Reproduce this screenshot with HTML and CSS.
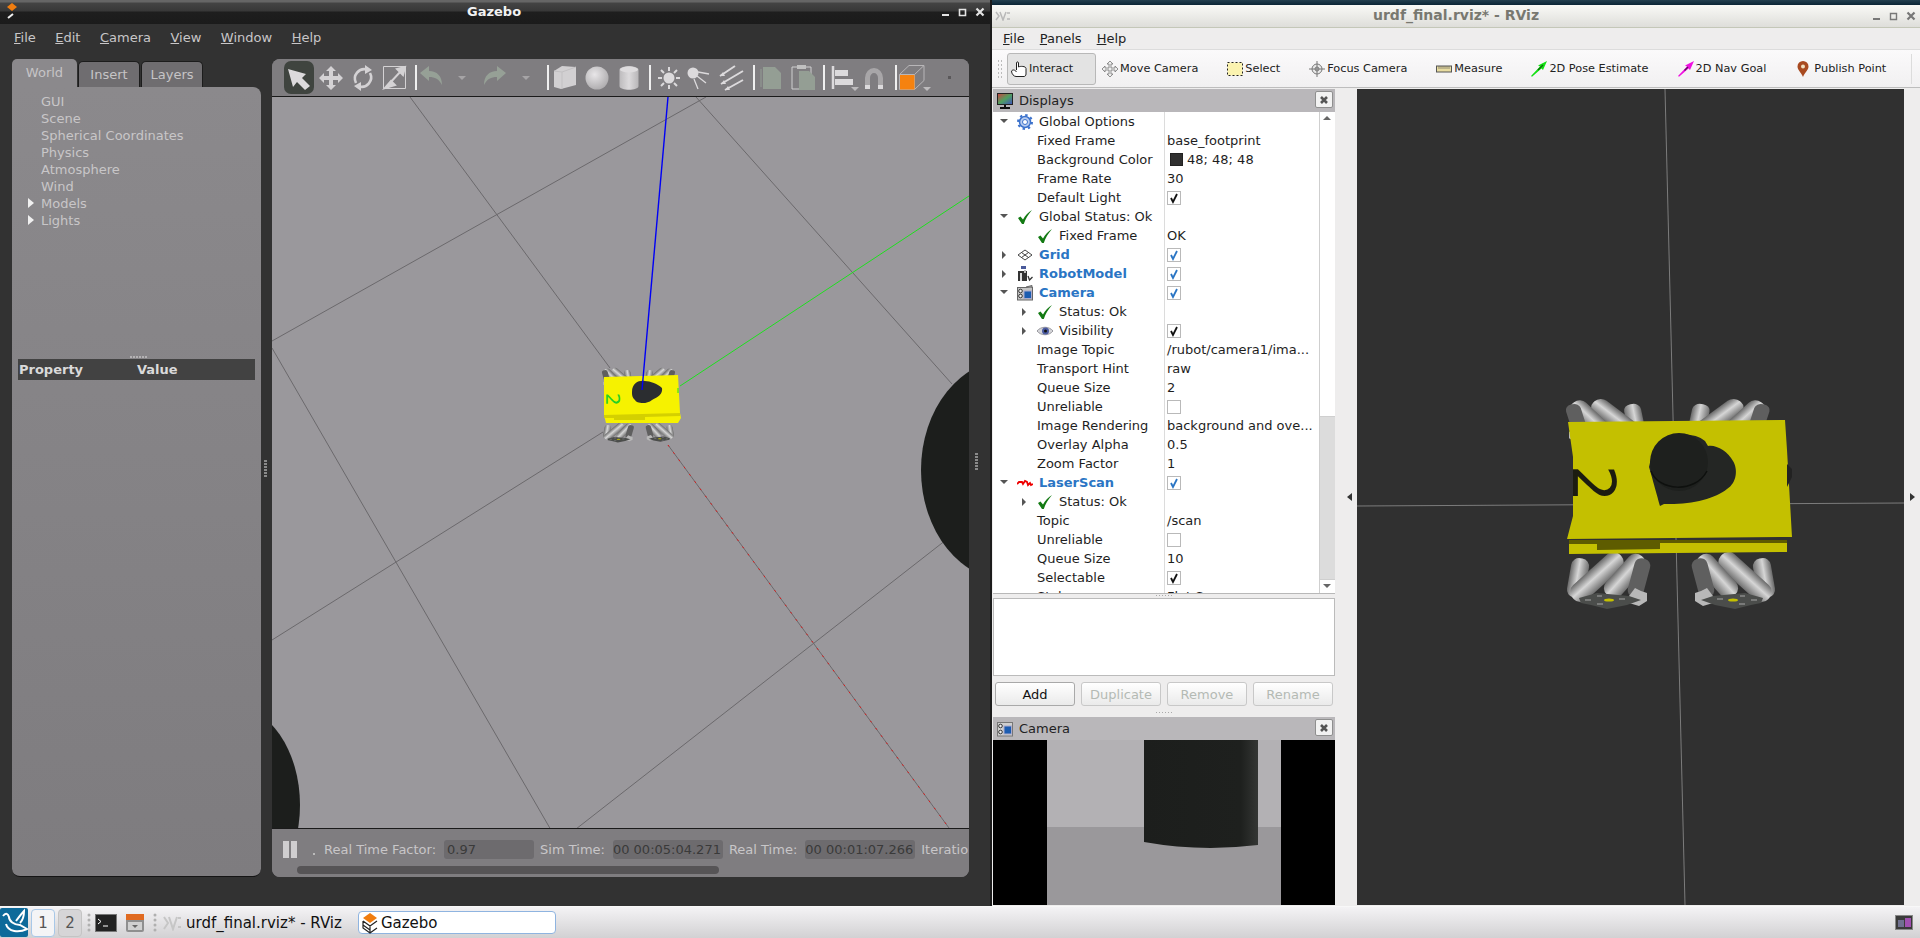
FILE: index.html
```html
<!DOCTYPE html>
<html lang="en">
<head>
<meta charset="utf-8">
<title>Gazebo and RViz</title>
<link rel="stylesheet" href="styles.css">
</head>
<body>
<svg class="defs" aria-hidden="true">
  <defs>
    <linearGradient id="roll" x1="0" y1="0" x2="0" y2="1">
      <stop offset="0" stop-color="#6a6a6a"/><stop offset=".45" stop-color="#d6d6d6"/><stop offset="1" stop-color="#707070"/>
    </linearGradient>
    <radialGradient id="ball" cx=".4" cy=".35" r=".75">
      <stop offset="0" stop-color="#e8e6e8"/><stop offset="1" stop-color="#a8a6a8"/>
    </radialGradient>
    <linearGradient id="can" x1="0" y1="0" x2="1" y2="0">
      <stop offset="0" stop-color="#bdbbbd"/><stop offset=".5" stop-color="#dcdadc"/><stop offset="1" stop-color="#b8b6b8"/>
    </linearGradient>
    <linearGradient id="cylshade" x1="0" y1="0" x2="1" y2="0">
      <stop offset="0" stop-color="#1c1e1c"/><stop offset=".85" stop-color="#1e201e"/><stop offset="1" stop-color="#343634"/>
    </linearGradient>
    <linearGradient id="screen" x1="0" y1="0" x2="1" y2="1">
      <stop offset="0" stop-color="#d04040"/><stop offset=".5" stop-color="#50a060"/><stop offset="1" stop-color="#4050c0"/>
    </linearGradient>
    <g id="wh">
      <rect x="-20" y="-9" width="40" height="18" rx="8" fill="url(#roll)" transform="translate(11,26) rotate(-80)"/>
      <rect x="-32" y="-10" width="64" height="20" rx="9" fill="url(#roll)" transform="translate(30,25) rotate(-42)"/>
      <rect x="-26" y="-10" width="52" height="20" rx="9" fill="url(#roll)" transform="translate(58,24) rotate(-48)"/>
      <rect x="-20" y="-8" width="40" height="16" rx="7" fill="#5f5f5f" transform="translate(72,26) rotate(-75)"/>
      <path d="M62,44 l6,-8 6,3 6,2 0,8 -8,5 -10,-3z" fill="#b8b8b8"/>
      <path d="M12,46 L30,41 62,44 74,48 60,53 40,57 24,53 14,51z" fill="#4b4d4b"/>
      <ellipse cx="42" cy="48" rx="5" ry="1.6" fill="#c4c000"/>
      <path d="M18,48h6M30,44h5M52,47h6M30,52h6" stroke="#a8a8a8" stroke-width="1"/>
    </g>
    <symbol id="i-check" viewBox="0 0 16 16">
      <path d="M1,9 L3.500,7.500 L6,10.500 C8,6.500 11,3.500 15,1 C11,5.500 8.500,10 6.800,15 L5,15 Z" fill="#137a13"/>
    </symbol>
    <symbol id="i-gear" viewBox="0 0 16 16">
      <circle cx="8" cy="8" r="5.500" fill="#b9cdf0" stroke="#3c72cc" stroke-width="1.500"/>
      <circle cx="8" cy="8" r="7" fill="none" stroke="#3c72cc" stroke-width="2" stroke-dasharray="2.400 3.100"/>
      <circle cx="8" cy="8" r="2.500" fill="#fff" stroke="#3c72cc"/>
    </symbol>
    <symbol id="i-grid" viewBox="0 0 16 16">
      <path d="M8,3 L15,8 8,13 1,8Z M4.500,5.500 L11.500,10.500 M11.500,5.500 L4.500,10.500" fill="none" stroke="#444" stroke-width="1"/>
    </symbol>
    <symbol id="i-robot" viewBox="0 0 16 16">
      <rect x="4" y="0" width="5" height="3" fill="#4a5a9a"/>
      <rect x="1" y="5" width="9" height="10" fill="#333"/>
      <rect x="3" y="7" width="2" height="8" fill="#ddd"/>
      <rect x="7" y="4" width="2" height="3" fill="#bbb"/>
      <path d="M11,10 l1.500,4 3,-3" fill="none" stroke="#333" stroke-width="1.300"/>
    </symbol>
    <symbol id="i-camera" viewBox="0 0 16 16">
      <rect x="0.500" y="2.500" width="15" height="12.500" fill="#c4c4c4" stroke="#666"/>
      <path d="M9,2 L15,0.500 V3" fill="#999" stroke="#666"/>
      <circle cx="3.500" cy="6" r="1.800" fill="#eee" stroke="#333"/>
      <circle cx="3.500" cy="11" r="1.800" fill="#eee" stroke="#333"/>
      <rect x="7" y="6" width="7.500" height="7.500" fill="#1c5cb0" stroke="#aac"/>
    </symbol>
    <symbol id="i-eye" viewBox="0 0 16 16">
      <path d="M0,8 C4,3 12,3 16,8 C12,13 4,13 0,8Z" fill="#d4d4d8" stroke="#9a9aa0"/>
      <circle cx="8.500" cy="8" r="3.500" fill="#4a5aa0"/>
      <circle cx="8.500" cy="8" r="1.500" fill="#111"/>
    </symbol>
    <symbol id="i-laser" viewBox="0 0 16 16">
      <path d="M0,9 L2,7 5,7 6,9 8,6 10,7 11,10 13,8 14,10 16,9" fill="none" stroke="#ee0000" stroke-width="1.800"/>
    </symbol>
    <symbol id="i-close" viewBox="0 0 10 10">
      <path d="M2,2 L8,8 M8,2 L2,8" stroke="#555" stroke-width="2.600"/>
    </symbol>
    <symbol id="i-cam-title" viewBox="0 0 16 16">
      <rect x="0.500" y="1.500" width="15" height="13.500" fill="#cfcfcf" stroke="#777"/>
      <circle cx="3.500" cy="5" r="1.800" fill="#eee" stroke="#333"/>
      <circle cx="3.500" cy="11" r="1.800" fill="#eee" stroke="#333"/>
      <rect x="7" y="5" width="7.500" height="8" fill="#1c5cb0" stroke="#aac"/>
    </symbol>
    <symbol id="i-grip" viewBox="0 0 6 20">
      <path d="M1,2h1M4,2h1M1,6h1M4,6h1M1,10h1M4,10h1M1,14h1M4,14h1M1,18h1M4,18h1" stroke="#bbb" stroke-width="2"/>
    </symbol>
  </defs>
</svg>

<main class="desktop">
  <section class="gazebo">
    <header class="gz-title">
      <svg class="gz-logo" viewBox="0 0 16 20" width="16" height="20"><path d="M8,1 L13,5 8,9 3,5Z" fill="#f07d10"/><path d="M4,16 L9,12" stroke="#f0f0f0" stroke-width="2"/></svg>
      <span class="gz-name">Gazebo</span>
      <div class="gz-winbtns">
        <svg viewBox="0 0 10 10" width="10" height="10"><path d="M1,8h7" stroke="#e4e4e4" stroke-width="2"/></svg>
        <svg viewBox="0 0 10 10" width="10" height="10"><path d="M1.500,2.500h6v6h-6z" fill="none" stroke="#e4e4e4" stroke-width="1.600"/></svg>
        <svg viewBox="0 0 10 10" width="10" height="10"><path d="M1.500,1.500L8.500,8.500M8.500,1.500L1.500,8.500" stroke="#e4e4e4" stroke-width="2.200"/></svg>
      </div>
    </header>
    <nav class="gz-menu">
      <span><u>F</u>ile</span><span><u>E</u>dit</span><span><u>C</u>amera</span><span><u>V</u>iew</span><span><u>W</u>indow</span><span><u>H</u>elp</span>
    </nav>
    <div class="gz-body">
      <aside class="gz-left">
        <div class="gz-tabs">
          <span class="gz-tab active">World</span><span class="gz-tab">Insert</span><span class="gz-tab">Layers</span>
        </div>
        <div class="gz-panel">
          <ul class="gz-tree">
            <li>GUI</li><li>Scene</li><li>Spherical Coordinates</li><li>Physics</li><li>Atmosphere</li><li>Wind</li>
            <li class="has-kids">Models</li><li class="has-kids">Lights</li>
          </ul>
          <div class="gz-split-dots"></div>
          <div class="gz-prop"><span class="gz-prop-a">Property</span><span>Value</span></div>
        </div>
      </aside>
      <div class="gz-gutter"><span class="gz-grip"></span></div>
      <div class="gz-main">
        <div class="gz-tools">
          <span class="tb w32 active"><svg viewBox="0 0 30 33" width="30" height="33"><path d="M4,8 L22,13 18,17 26,25 21,29 13,21 9,26Z" fill="#dcdadc"/></svg></span>
          <span class="tb w32"><svg viewBox="0 0 32 34" width="32" height="34"><path d="M16,5 l5,5 h-3 v5 h5 v-3 l5,5 -5,5 v-3 h-5 v5 h3 l-5,5 -5,-5 h3 v-5 h-5 v3 l-5,-5 5,-5 v3 h5 v-5 h-3z" fill="#d4d2d4"/></svg></span>
          <span class="tb w32"><svg viewBox="0 0 32 34" width="32" height="34"><path d="M9,22 A9.500,9.500 0 0 1 20,8.500 M23,12 A9.500,9.500 0 0 1 12,25.500" fill="none" stroke="#d4d2d4" stroke-width="2.600"/><path d="M18,4 L25,9 18,13Z M14,21 L7,25 14,30Z" fill="#d4d2d4"/></svg></span>
          <span class="tb w32"><svg viewBox="0 0 32 34" width="32" height="34"><path d="M4.500,5.500h22v22h-22z" fill="none" stroke="#d4d2d4"/><path d="M6,27 L12,20 16,24Z M26,6 L18,8 24,14Z M10,23 L22,10" fill="#d4d2d4" stroke="#d4d2d4" stroke-width="2"/></svg></span>
          <span class="sep"></span>
          <span class="tb w28"><svg viewBox="0 0 28 34" width="28" height="34"><path d="M3,12 L12,5 12,10 C20,10 25,15 25,24 C22,18 18,16 12,16 L12,20Z" fill="#96a096"/></svg></span>
          <span class="tb w34"><span class="dd"></span></span>
          <span class="tb w30"><svg viewBox="0 0 30 34" width="30" height="34"><path d="M27,12 L18,5 18,10 C10,10 5,15 5,24 C8,18 12,16 18,16 L18,20Z" fill="#96a096"/></svg></span>
          <span class="tb w34"><span class="dd"></span></span>
          <span class="sep"></span>
          <span class="tb w32"><svg viewBox="0 0 32 34" width="32" height="34"><path d="M5,10 L13,5 27,6 27,24 12,28 5,26Z" fill="#d2d0d2"/><path d="M5,10 L13,11 27,6 M13,11V28" fill="none" stroke="#c2c0c2"/></svg></span>
          <span class="tb w32"><svg viewBox="0 0 32 34" width="32" height="34"><circle cx="16" cy="17" r="11.500" fill="url(#ball)"/></svg></span>
          <span class="tb w32"><svg viewBox="0 0 32 34" width="32" height="34"><path d="M6.500,9 C6.500,4 25.500,4 25.500,9 V25 C25.500,30 6.500,30 6.500,25Z" fill="url(#can)"/><ellipse cx="16" cy="8.500" rx="9" ry="3" fill="#dedcde"/></svg></span>
          <span class="sep"></span>
          <span class="tb w36"><svg viewBox="0 0 36 34" width="36" height="34"><circle cx="18" cy="17" r="5.500" fill="#dcdadc"/><path d="M18,6v4M18,24v4M7,17h4M25,17h4M10,9l3,3M26,9l-3,3M10,25l3,-3M26,25l-3,-3" stroke="#dcdadc" stroke-width="2"/></svg></span>
          <span class="tb w24"><svg viewBox="0 0 24 34" width="24" height="34" class="over"><circle cx="6" cy="12" r="5.500" fill="#dcdadc"/><path d="M11,11l11,2M10,15l9,7M7,18l4,10" stroke="#dcdadc" stroke-width="1.300"/></svg></span>
          <span class="tb w42"><svg viewBox="0 0 42 34" width="42" height="34"><path d="M9,15 L24,5 M10,23 L32,10 M14,29 L32,19" stroke="#dcdadc" stroke-width="2"/><path d="M9,15l5,0 -2,-4zM10,23l5,0 -2,-4zM14,29l5,0 -2,-4z" fill="#dcdadc"/></svg></span>
          <span class="sep flush"></span>
          <span class="tb w32"><svg viewBox="0 0 32 34" width="32" height="34"><path d="M8,6 H20 L26,12 V28 H8Z" fill="#949e94"/><path d="M6,8V26" stroke="#949e94"/></svg></span>
          <span class="tb w32"><svg viewBox="0 0 32 34" width="32" height="34"><path d="M5,6 H24 V28 H5Z" fill="none" stroke="#d0d0d0"/><path d="M12,10 H22 L28,16 V29 H12Z" fill="#949e94"/><rect x="10" y="4" width="9" height="4" fill="#c0c0c0"/></svg></span>
          <span class="sep"></span>
          <span class="tb w36"><svg viewBox="0 0 36 34" width="36" height="34"><path d="M8,5V28" stroke="#dcdadc" stroke-width="2.500"/><path d="M10,9h13v6h-13zM10,18h18v6h-18z" fill="#dcdadc"/><path d="M26,26h8l-4,4z" fill="#bdbbbd"/></svg></span>
          <span class="tb w26"><svg viewBox="0 0 34 34" width="34" height="34" class="wide"><path d="M8,28 V17 A9,10 0 0 1 26,17 V28 H21 V17 A4,5 0 0 0 13,17 V28Z" fill="#a8a6a8"/><path d="M8,24h5v4h-5zM21,24h5v4h-5z" fill="#dcdadc"/></svg></span>
          <span class="sep far"></span>
          <span class="tb w44"><svg viewBox="0 0 44 34" width="44" height="34"><path d="M2.500,13.500h15v15h-15zM2.500,13.500 L12,4.500h15v15l-9.500,9M17.500,13.500 L27,4.500" fill="none" stroke="#b8b6b8"/><rect x="3" y="14" width="14.500" height="14.500" fill="#f5820f"/><path d="M26,26h8l-4,4z" fill="#bdbbbd"/></svg></span>
          <span class="tb-dot"></span>
        </div>
        <svg class="gz-scene" viewBox="272 97 697 731" preserveAspectRatio="none">
          <g class="gl">
            <path d="M706,97 L272,341"/>
            <path d="M410,97 L610,368"/>
            <path d="M696,97 L952,384"/>
            <path d="M272,348 L551,830"/>
            <path d="M272,640 L603,432"/>
            <path d="M576,829 L969,522"/>
            <path d="M668,445 L949,828"/>
          </g>
          <path d="M668,445 L949,828" class="rd"/>
          <path d="M680,386 L969,196" class="gn"/>
          <ellipse cx="1010" cy="470" rx="89" ry="111" class="blk"/>
          <ellipse cx="230" cy="805" rx="70" ry="100" class="blk"/>
          <use href="#wh" transform="translate(632,368) scale(-.36,.34)"/>
          <use href="#wh" transform="translate(645,368) scale(.36,.34)"/>
          <use href="#wh" transform="translate(603,423) scale(.37,.34)"/>
          <use href="#wh" transform="translate(674,423) scale(-.34,.33)"/>
          <path d="M604,377 L678,375 680,413 681,418 678,423 606,423 604,415Z" fill="#f6f200"/>
          <path d="M604,415 L680,413 680,416 645,417 645,420 614,420 614,418 604,418Z" fill="#d4d000"/>
          <text x="0" y="0" class="gz-two" transform="translate(606,393) rotate(90)">2</text>
          <path d="M632,392 C632,382 640,380 645,381 C650,381 658,384 662,388 C663,394 658,397 652,400 C646,405 636,403 635,400 C632,397 632,395 632,392Z" fill="#2b2d30"/>
          <path d="M668,97 L642,390" class="bl"/>
          <path d="M678,388v5" class="gn"/>
        </svg>
        <div class="gz-status">
          <div class="gz-stats">
            <svg class="gz-pause" viewBox="0 0 14 17" width="14" height="17"><path d="M0,0h6v17h-6zM8,0h6v17h-6z" fill="#d0ced0"/></svg>
            <span class="gz-dot"></span>
            <span class="lbl first">Real Time Factor:</span><span class="fld wide">0.97</span>
            <span class="lbl">Sim Time:</span><span class="fld">00 00:05:04.271</span>
            <span class="lbl">Real Time:</span><span class="fld">00 00:01:07.266</span>
            <span class="lbl">Iterations:</span>
          </div>
          <div class="gz-scroll"><span class="gz-thumb"></span></div>
        </div>
      </div>
      <div class="gz-gutter right"><span class="gz-grip"></span></div>
    </div>
    <div class="gz-foot">
      <svg viewBox="0 0 11 11" width="11" height="11"><path d="M9.500,1.500h.01M6.500,4.500h.01M9.500,4.500h.01M3.500,7.500h.01M6.500,7.500h.01M9.500,7.500h.01M.500,10.500h.01M3.500,10.500h.01M6.500,10.500h.01M9.500,10.500h.01" stroke="#8a8a8a" stroke-width="2"/></svg>
    </div>
  </section>

  <section class="rviz">
    <div class="rv-top"></div>
    <header class="rv-title">
      <svg class="rv-logo" viewBox="0 0 16 10" width="16" height="10"><path d="M1,1l3,4 -3,4M5,1l3,8 3,-8M12,2h3M12,8h3" fill="none" stroke="#b8b8b8" stroke-width="1.500"/></svg>
      <span class="rv-name">urdf_final.rviz* - RViz</span>
      <div class="rv-winbtns">
        <svg viewBox="0 0 10 10" width="10" height="10"><path d="M1,8h7" stroke="#777" stroke-width="2"/></svg>
        <svg viewBox="0 0 10 10" width="10" height="10"><path d="M1.500,2.500h6v6h-6z" fill="none" stroke="#777" stroke-width="1.400"/></svg>
        <svg viewBox="0 0 10 10" width="10" height="10"><path d="M1.500,1.500L8.500,8.500M8.500,1.500L1.500,8.500" stroke="#777" stroke-width="2.200"/></svg>
      </div>
    </header>
    <nav class="rv-menu"><span><u>F</u>ile</span><span><u>P</u>anels</span><span><u>H</u>elp</span></nav>
    <div class="rv-tools">
      <svg class="rv-handle" viewBox="0 0 6 20" width="6" height="20"><use href="#i-grip"/></svg>
      <div class="rt on"><svg viewBox="0 0 16 16" width="16" height="16"><path d="M5.500,9 V2 C5.500,.5 7.500,.5 7.500,2 V6 C9,5 15,5 15,7.500 V13 C15,14.500 14,15.500 13,15.500 H5 C3,15.500 .5,13 .5,10 C1.500,8.500 4,8.500 5.500,11" fill="#fff" stroke="#222"/></svg><span>Interact</span></div>
      <div class="rt"><svg viewBox="0 0 16 16" width="16" height="16"><path d="M8,0 l3,3h-2v4h4v-2l3,3 -3,3v-2h-4v4h2l-3,3 -3,-3h2v-4h-4v2l-3,-3 3,-3v2h4v-4h-2z" fill="#eee" stroke="#777" stroke-width=".8"/></svg><span>Move Camera</span></div>
      <div class="rt"><svg viewBox="0 0 16 16" width="16" height="16"><rect x=".5" y="1.500" width="15" height="13" fill="#fbf3b0" stroke="#222" stroke-dasharray="2 2"/></svg><span>Select</span></div>
      <div class="rt"><svg viewBox="0 0 16 16" width="16" height="16"><circle cx="8" cy="8" r="5" fill="#e8e8e8" stroke="#777"/><path d="M8,0V16M0,8H16" stroke="#777"/><circle cx="8" cy="8" r="2" fill="none" stroke="#777"/></svg><span>Focus Camera</span></div>
      <div class="rt"><svg viewBox="0 0 16 16" width="16" height="16"><rect x=".5" y="5" width="15" height="6" fill="#e8dca0" stroke="#555"/><path d="M3,5v3M5,5v3M7,5v3M9,5v3M11,5v3M13,5v3" stroke="#555" stroke-width=".6"/></svg><span>Measure</span></div>
      <div class="rt"><svg viewBox="0 0 16 16" width="16" height="16"><path d="M0,15 L9,5.500 7,4.500 16,0 12,9 10.500,7.500 1,15.800Z" fill="#12e012"/><path d="M7,9 L12,4" stroke="#0a700a" stroke-width="1.400"/></svg><span>2D Pose Estimate</span></div>
      <div class="rt"><svg viewBox="0 0 16 16" width="16" height="16"><path d="M0,15 L9,5.500 7,4.500 16,0 12,9 10.500,7.500 1,15.800Z" fill="#f010e0"/><path d="M6.500,9.500 L10,6" stroke="#601060" stroke-width="1.400"/></svg><span>2D Nav Goal</span></div>
      <div class="rt pin"><svg viewBox="0 0 12 16" width="12" height="16"><path d="M6,16 C4,11 .5,9 .5,5.500 A5.500,5.500 0 0 1 11.500,5.500 C11.500,9 8,11 6,16Z" fill="#a84a20"/><circle cx="6" cy="5.500" r="2" fill="#f0e0c0"/></svg><span>Publish Point</span></div>
      <span class="rv-more-wrap"><span class="rv-more">››</span></span>
    </div>
    <div class="rv-body">
      <aside class="rv-dock">
        <div class="dock-title"><svg viewBox="0 0 16 16" width="16" height="16"><rect x=".5" y=".5" width="15" height="11" fill="url(#screen)" stroke="#222"/><path d="M8,12v2M3,15h10" stroke="#111" stroke-width="2"/></svg><span>Displays</span><span class="dock-x"><svg width="10" height="10"><use href="#i-close"/></svg></span></div>
        <div class="tree-wrap">
          <div class="tree">
            <div class="row"><div class="name"><span class="caret down"></span><svg class="ic"><use href="#i-gear"/></svg><span>Global Options</span></div><div class="val"></div></div>
            <div class="row"><div class="name prop">Fixed Frame</div><div class="val">base_footprint</div></div>
            <div class="row"><div class="name prop">Background Color</div><div class="val"><span class="swatch"></span>48; 48; 48</div></div>
            <div class="row"><div class="name prop">Frame Rate</div><div class="val">30</div></div>
            <div class="row"><div class="name prop">Default Light</div><div class="val"><span class="cb"><svg viewBox="0 0 12 12"><path d="M3,6 L5,10 9,2" class="tick"/></svg></span></div></div>
            <div class="row"><div class="name"><span class="caret down"></span><svg class="ic"><use href="#i-check"/></svg><span>Global Status: Ok</span></div><div class="val"></div></div>
            <div class="row"><div class="name sub"><span class="caret"></span><svg class="ic"><use href="#i-check"/></svg><span>Fixed Frame</span></div><div class="val">OK</div></div>
            <div class="row disp"><div class="name"><span class="caret right"></span><svg class="ic"><use href="#i-grid"/></svg><span>Grid</span></div><div class="val"><span class="cb"><svg viewBox="0 0 12 12"><path d="M3,6 L5,10 9,2" class="tick"/></svg></span></div></div>
            <div class="row disp"><div class="name"><span class="caret right"></span><svg class="ic"><use href="#i-robot"/></svg><span>RobotModel</span></div><div class="val"><span class="cb"><svg viewBox="0 0 12 12"><path d="M3,6 L5,10 9,2" class="tick"/></svg></span></div></div>
            <div class="row disp"><div class="name"><span class="caret down"></span><svg class="ic"><use href="#i-camera"/></svg><span>Camera</span></div><div class="val"><span class="cb"><svg viewBox="0 0 12 12"><path d="M3,6 L5,10 9,2" class="tick"/></svg></span></div></div>
            <div class="row"><div class="name sub"><span class="caret right"></span><svg class="ic"><use href="#i-check"/></svg><span>Status: Ok</span></div><div class="val"></div></div>
            <div class="row"><div class="name sub"><span class="caret right"></span><svg class="ic"><use href="#i-eye"/></svg><span>Visibility</span></div><div class="val"><span class="cb"><svg viewBox="0 0 12 12"><path d="M3,6 L5,10 9,2" class="tick"/></svg></span></div></div>
            <div class="row"><div class="name prop">Image Topic</div><div class="val">/rubot/camera1/ima...</div></div>
            <div class="row"><div class="name prop">Transport Hint</div><div class="val">raw</div></div>
            <div class="row"><div class="name prop">Queue Size</div><div class="val">2</div></div>
            <div class="row"><div class="name prop">Unreliable</div><div class="val"><span class="cb"></span></div></div>
            <div class="row"><div class="name prop">Image Rendering</div><div class="val">background and ove...</div></div>
            <div class="row"><div class="name prop">Overlay Alpha</div><div class="val">0.5</div></div>
            <div class="row"><div class="name prop">Zoom Factor</div><div class="val">1</div></div>
            <div class="row disp"><div class="name"><span class="caret down"></span><svg class="ic"><use href="#i-laser"/></svg><span>LaserScan</span></div><div class="val"><span class="cb"><svg viewBox="0 0 12 12"><path d="M3,6 L5,10 9,2" class="tick"/></svg></span></div></div>
            <div class="row"><div class="name sub"><span class="caret right"></span><svg class="ic"><use href="#i-check"/></svg><span>Status: Ok</span></div><div class="val"></div></div>
            <div class="row"><div class="name prop">Topic</div><div class="val">/scan</div></div>
            <div class="row"><div class="name prop">Unreliable</div><div class="val"><span class="cb"></span></div></div>
            <div class="row"><div class="name prop">Queue Size</div><div class="val">10</div></div>
            <div class="row"><div class="name prop">Selectable</div><div class="val"><span class="cb"><svg viewBox="0 0 12 12"><path d="M3,6 L5,10 9,2" class="tick"/></svg></span></div></div>
            <div class="row"><div class="name prop">Style</div><div class="val">Flat Squares</div></div>
          </div>
          <div class="vbar"><span class="vbar-up"></span><span class="vbar-thumb"></span><span class="vbar-trough"></span><span class="vbar-down"></span></div>
        </div>
        <div class="dots-h"></div>
        <div class="desc"></div>
        <div class="dock-btns">
          <button class="btn">Add</button><button class="btn off">Duplicate</button><button class="btn off">Remove</button><button class="btn off">Rename</button>
        </div>
        <div class="dots-h tall"></div>
        <div class="dock-title"><svg viewBox="0 0 16 16" width="16" height="16"><use href="#i-cam-title"/></svg><span>Camera</span><span class="dock-x"><svg width="10" height="10"><use href="#i-close"/></svg></span></div>
        <svg class="cam-img" viewBox="993 741 342 165" preserveAspectRatio="none">
          <rect x="993" y="741" width="342" height="165" fill="#000"/>
          <rect x="1047" y="741" width="234" height="87" fill="#b3b1b4"/>
          <rect x="1047" y="828" width="234" height="78" fill="#9a989b"/>
          <path d="M1144,741 H1258 V846 Q1200,853 1144,843Z" fill="url(#cylshade)"/>
        </svg>
      </aside>
      <div class="rv-split"><span class="arrow-l"></span></div>
      <svg class="rv-scene" viewBox="1357 90 547 816" preserveAspectRatio="none">
        <path d="M1665,90 L1685,906" class="rl"/>
        <path d="M1357,507 L1904,504" class="rl"/>
        <use href="#wh" transform="translate(1645,400) scale(-.95,.8)"/>
        <use href="#wh" transform="translate(1688,400) scale(.98,.8)"/>
        <use href="#wh" transform="translate(1567,553)"/>
        <use href="#wh" transform="translate(1775,553) scale(-1,1)"/>
        <path d="M1569,541 H1787 V553 L1569,555Z" fill="#c4c000"/>
        <path d="M1569,541 H1787 V544 H1660 V550 L1597,551 V545 H1569Z" fill="#5e5c00"/>
        <path d="M1568,423 L1785,421 1787,451 1792,538 1567,540 1573,517 1573,458Z" fill="#c4c000"/>
        <text x="0" y="0" class="rv-two" transform="translate(1573,466) rotate(90)">2</text>
        <path d="M1787,465 L1792,470 1792,478 1787,488Z" fill="#222"/>
        <path d="M1649,468 C1652,478 1658,500 1660,507 L1664,505 C1690,506 1715,500 1727,490 C1737,484 1738,470 1733,462 C1728,452 1715,445 1708,447 L1705,442 C1690,430 1660,435 1652,455Z" fill="#242624"/>
        <circle cx="1679" cy="463" r="29" fill="#1e201e"/>
        <path d="M1651,472 C1658,492 1695,495 1707,472" fill="none" stroke="#0e100e" stroke-width="1.500"/>
      </svg>
      <div class="rv-edge"><span class="arrow-r"></span></div>
    </div>
  </section>
</main>

<footer class="taskbar">
  <span class="start"><svg viewBox="0 0 28 28" width="28" height="28"><path d="M3,8 C6,4 8,6 9,9 C9,13 14,17 20,17 L27,21 C19,25 8,24 6,16 M16,13 C19,9 22,5 24,3 C24,8 23,12 20,15" fill="none" stroke="#fff" stroke-width="2"/></svg></span>
  <span class="pager cur">1</span><span class="pager pressed">2</span>
  <svg class="tk-dots" viewBox="0 0 4 20" width="4" height="20"><path d="M2,2v.01M2,7v.01M2,12v.01M2,17v.01" stroke="#b0b0b0" stroke-width="3" stroke-linecap="round"/></svg>
  <svg class="tk-app" viewBox="0 0 22 18" width="22" height="18"><rect x=".5" y=".5" width="21" height="17" fill="#222" stroke="#777"/><path d="M3,5l3,2.500 -3,2.500M8,12h5" fill="none" stroke="#fff"/></svg>
  <svg class="tk-app2" viewBox="0 0 18 20" width="18" height="20"><rect x="0" y="1" width="18" height="18" rx="2" fill="#8f8f8f"/><rect x="0" y="1" width="18" height="6" fill="#e06a20"/><rect x="2" y="9" width="14" height="8" fill="#d0d0d0"/><path d="M6,12h6l-3,3z" fill="#666"/></svg>
  <svg class="tk-dots b" viewBox="0 0 4 20" width="4" height="20"><path d="M2,2v.01M2,7v.01M2,12v.01M2,17v.01" stroke="#b0b0b0" stroke-width="3" stroke-linecap="round"/></svg>
  <span class="tk-win"><svg viewBox="0 0 20 16" width="20" height="16"><path d="M2,2l4,6 -4,6M7,2l4,12 4,-12M16,3h3M16,12h3" fill="none" stroke="#c6c6c6" stroke-width="2"/></svg>urdf_final.rviz* - RViz</span>
  <span class="tk-win active"><svg viewBox="0 0 18 22" width="18" height="22"><path d="M9,1 L16,6 9,11 2,6Z" fill="#f07d10"/><path d="M2,9 L9,14 16,9 M2,9 V16 L9,21 16,16 M9,14 V21 M2,13 L9,18" fill="none" stroke="#222" stroke-width="1.200"/></svg>Gazebo</span>
  <svg class="tk-tray" viewBox="0 0 18 15" width="18" height="15"><rect x=".5" y=".5" width="17" height="14" fill="#3a3a3a" stroke="#888"/><rect x="10" y="3" width="6" height="9" fill="#a050b0"/><rect x="3" y="5" width="6" height="7" fill="#707090"/></svg>
</footer>
</body>
</html>
```

FILE: styles.css
```css
* { box-sizing: border-box; }
html, body { margin: 0; height: 100%; overflow: hidden; }
body {
  display: flex;
  flex-direction: column;
  width: 1920px;
  height: 938px;
  font-family: "DejaVu Sans", sans-serif;
  font-size: 13px;
  background: #323232;
}
.defs { position: absolute; width: 0; height: 0; }
svg { display: block; flex: none; }
u { text-underline-offset: 1px; }

.desktop { display: flex; height: 906px; }

/* Gazebo window */
.gazebo { width: 990px; display: flex; flex-direction: column; background: #323232; }
.gz-title {
  height: 24px;
  display: flex;
  align-items: center;
  position: relative;
  background: linear-gradient(#666 0, #666 2px, #444 3px, #383838 11px, #1e1e1e 12px, #1b1b1b 100%);
}
.gz-logo { margin-left: 4px; }
.gz-name {
  position: absolute;
  left: 467px;
  top: 3px;
  color: #f2f2f2;
  font-weight: bold;
  font-size: 13px;
  line-height: 17px;
}
.gz-winbtns { margin-left: auto; margin-right: 5px; display: flex; gap: 7px; }
.gz-menu { height: 26px; display: flex; align-items: center; gap: 19.500px; padding-left: 14px; color: #c8c6c8; }
.gz-body { height: 827px; padding-top: 9px; display: flex; }
.gz-left { margin-left: 12px; width: 249px; display: flex; flex-direction: column; }
.gz-tabs { height: 28px; display: flex; align-items: flex-end; gap: 1px; }
.gz-tab {
  width: 62px;
  height: 26px;
  background: #6f6d70;
  border: 1px solid #1c1c1c;
  border-bottom: none;
  border-radius: 5px 5px 0 0;
  color: #c6c4c6;
  text-align: center;
  line-height: 25px;
}
.gz-tab.active { width: 65px; height: 28px; background: #8b898c; border: none; line-height: 28px; }
.gz-panel {
  height: 790px;
  position: relative;
  padding-top: 6px;
  background: linear-gradient(#8b898c, #7e7c7f);
  border-bottom: 1px solid #151515;
  border-radius: 0 8px 8px 8px;
  color: #c8c6c8;
}
.gz-tree { margin: 0; padding: 0 0 0 29px; list-style: none; line-height: 17px; }
.gz-tree li { position: relative; }
.has-kids::before {
  content: "";
  position: absolute;
  left: -13px;
  top: 3px;
  border-left: 6px solid #f0f0f0;
  border-top: 5.500px solid transparent;
  border-bottom: 5.500px solid transparent;
}
.gz-split-dots {
  width: 17px;
  height: 2px;
  margin: 127px 0 1px 118px;
  background: repeating-linear-gradient(90deg, #b4b2b4 0 2px, transparent 2px 3px);
}
.gz-prop {
  margin-left: 6px;
  width: 237px;
  height: 21px;
  display: flex;
  align-items: center;
  background: #424242;
  color: #dadada;
  font-weight: bold;
  padding-left: 1px;
}
.gz-prop-a { width: 118px; }
.gz-gutter { width: 11px; position: relative; }
.gz-gutter.right { width: 21px; }
.gz-grip {
  position: absolute;
  left: 3px;
  top: 401px;
  width: 3px;
  height: 17px;
  background: repeating-linear-gradient(#8a8a8a 0 2px, transparent 2px 3px);
}
.gz-gutter.right .gz-grip { left: 6px; top: 394px; }
.gz-main {
  width: 697px;
  height: 818px;
  display: flex;
  flex-direction: column;
  overflow: hidden;
  border-radius: 8px;
  background: #7f7d80;
}
.gz-tools {
  height: 38px;
  flex: none;
  display: flex;
  align-items: center;
  padding-left: 11px;
  background: #7f7d80;
  border-bottom: 1px solid #1a1a1a;
}
.tb { display: flex; align-items: center; justify-content: center; height: 34px; flex: none; position: relative; }
.w24 { width: 24px; }
.w26 { width: 26px; }
.w28 { width: 28px; }
.w30 { width: 30px; }
.w32 { width: 32px; }
.w34 { width: 34px; }
.w36 { width: 36px; }
.w42 { width: 42px; }
.w44 { width: 44px; }
.tb.active svg { background: #3f443f; border-radius: 7px; }
.dd { border-top: 4px solid #a6a4a6; border-left: 4px solid transparent; border-right: 4px solid transparent; }
.sep { width: 2px; height: 25px; margin-left: 4px; flex: none; background: #efefef; }
.sep.flush { margin-left: 0; }
.sep.far { margin-left: 8px; }
.tb-dot { width: 3px; height: 3px; margin-left: 7px; background: #5a585a; }
.gz-scene { width: 697px; height: 731px; background: #9a989c; flex: none; }
.gl path { stroke: #6b696c; stroke-width: 1; fill: none; }
.rd { stroke: #e01818; stroke-width: 1; stroke-dasharray: 2 7; fill: none; }
.gn { stroke: #1ee01e; stroke-width: 1; fill: none; }
.bl { stroke: #0000f5; stroke-width: 1.400; fill: none; }
.blk { fill: #1c1e1c; }
.gz-two { font: 20px "DejaVu Sans", sans-serif; fill: #25d025; }
.rv-two { font: 58px "DejaVu Sans", sans-serif; fill: #1c1c10; }
.gz-status { height: 50px; flex: none; border-top: 1px solid #1a1a1a; background: #7f7d80; padding-top: 11px; border-bottom: 1px solid #151515; }
.gz-stats { display: flex; align-items: center; height: 19px; padding-left: 11px; color: #c8c6c8; white-space: nowrap; overflow: hidden; }
.gz-pause { margin-right: 16px; }
.gz-dot { width: 2px; height: 2px; background: #bbb; margin-top: 8px; flex: none; }
.lbl { margin-left: 6px; flex: none; }
.lbl.first { margin-left: 9px; }
.fld { width: 110px; height: 19px; margin-left: 8px; line-height: 19px; background: #6d6b6e; color: #3a3a3a; border-radius: 3px; flex: none; letter-spacing: 0; }
.fld.wide { width: 90px; padding-left: 3px; }
.gz-scroll { height: 8px; margin: 7px 0 0 25px; }
.gz-thumb { display: block; width: 422px; height: 8px; border-radius: 4px; background: #565456; }
.gz-foot { height: 29px; display: flex; justify-content: flex-end; align-items: flex-end; padding: 0 12px 12px 0; }

/* RViz window */
.rviz { flex: 1; display: flex; flex-direction: column; background: #eeeded; border-left: 2px solid #1c1c1c; }
.rv-top { height: 5px; background: linear-gradient(#24404f, #0c2636); flex: none; }
.rv-title {
  height: 23px;
  flex: none;
  display: flex;
  align-items: center;
  position: relative;
  background: linear-gradient(#f9f9f6, #dededa);
  border-bottom: 1px solid #c4c7b8;
}
.rv-logo { margin-left: 3px; }
.rv-name { position: absolute; left: 381px; top: 1px; color: #787870; font-weight: bold; font-size: 14px; line-height: 19px; }
.rv-winbtns { margin-left: auto; display: flex; gap: 7px; margin-right: 4px; }
.rv-menu { height: 22px; flex: none; display: flex; align-items: center; gap: 15px; padding-left: 11px; color: #222; background: #eeeded; border-bottom: 1px solid #dcdcdc; }
.rv-tools {
  height: 38px;
  flex: none;
  display: flex;
  align-items: center;
  gap: 2px;
  padding-left: 5px;
  background: linear-gradient(#fbfafb, #f1f0f1);
  border-bottom: 1px solid #bdbdbd;
  font-size: 11.300px;
  color: #222;
}
.rv-handle { margin-right: 2px; }
.rt { height: 32px; display: flex; align-items: center; gap: 2px; padding: 0 22px 0 3px; border: 1px solid transparent; flex: none; }
.rt.on { background: #e3e3e3; border-color: #b8b8b8; border-radius: 3px; }
.rt.pin { gap: 5px; padding-left: 5px; }
.rv-more-wrap { margin-left: auto; border-left: 1px solid #dcdcdc; height: 30px; width: 37px; display: flex; align-items: center; padding-left: 28px; }
.rv-body { display: flex; height: 817px; padding-top: 1px; }
.rv-dock { margin-left: 1px; width: 342px; display: flex; flex-direction: column; }
.dock-title { height: 23px; flex: none; display: flex; align-items: center; gap: 6px; padding-left: 4px; background: #b9b7ba; color: #222; position: relative; }
.dock-x {
  position: absolute;
  right: 2px;
  top: 2px;
  width: 18px;
  height: 17px;
  display: flex;
  align-items: center;
  justify-content: center;
  background: #f2f2f2;
  border: 1px solid #8f8f8f;
  border-radius: 2px;
}
.tree-wrap { height: 482px; flex: none; display: flex; background: #fff; border-bottom: 1px solid #b8b8b8; overflow: hidden; }
.tree { width: 327px; flex: none; color: #1e1e1e; border-right: 1px solid #cfcfcf; }
.row { height: 19px; display: flex; white-space: nowrap; }
.name { width: 172px; flex: none; display: flex; align-items: center; border-right: 1px solid #dcdcdc; }
.name.prop { padding-left: 44px; }
.caret { width: 14px; margin-left: 4px; height: 8px; flex: none; position: relative; }
.name.sub .caret { margin-left: 24px; }
.caret.down::before {
  content: "";
  position: absolute;
  left: 3px;
  top: 1px;
  border-top: 4px solid #555;
  border-left: 4px solid transparent;
  border-right: 4px solid transparent;
}
.caret.right::before {
  content: "";
  position: absolute;
  left: 5px;
  top: 0;
  border-left: 4px solid #555;
  border-top: 4px solid transparent;
  border-bottom: 4px solid transparent;
}
.ic { width: 16px; height: 16px; margin: 0 6px; }
.disp .name { color: #2a75c4; font-weight: bold; }
.val { display: flex; align-items: center; padding-left: 2px; }
.cb { width: 14px; height: 14px; background: #fff; border: 1px solid #b9b9b9; display: block; }
.cb svg { width: 12px; height: 12px; }
.tick { fill: none; stroke: #111; stroke-width: 1.800; }
.disp .tick { stroke: #2a75c4; }
.swatch { width: 13px; height: 13px; margin: 0 4px 0 3px; background: #303030; border: 1px solid #222; }
.vbar { width: 15px; flex: none; display: flex; flex-direction: column; background: #fff; }
.vbar-up { height: 13px; flex: none; position: relative; }
.vbar-up::before { content: ""; position: absolute; left: 3px; top: 4px; border-bottom: 4px solid #666; border-left: 4px solid transparent; border-right: 4px solid transparent; }
.vbar-thumb { height: 292px; flex: none; border-bottom: 1px solid #cfcfcf; }
.vbar-trough { flex: 1; background: #dcdcdc; }
.vbar-down { height: 14px; flex: none; position: relative; border-top: 1px solid #cfcfcf; }
.vbar-down::before { content: ""; position: absolute; left: 3px; top: 4px; border-top: 4px solid #666; border-left: 4px solid transparent; border-right: 4px solid transparent; }
.dots-h { height: 4px; flex: none; position: relative; }
.dots-h::after { content: ""; position: absolute; left: 163px; top: 1px; width: 16px; height: 1px; background: repeating-linear-gradient(90deg, #aaa 0 1px, transparent 1px 3px); }
.dots-h.tall { height: 11px; }
.dots-h.tall::after { top: 6px; }
.desc { height: 78px; flex: none; background: #fff; border: 1px solid #bbb; }
.dock-btns { display: flex; gap: 6px; padding: 6px 0 0 2px; flex: none; }
.btn {
  width: 80px;
  height: 24px;
  padding: 0;
  font: 13px "DejaVu Sans", sans-serif;
  color: #111;
  background: linear-gradient(#fff, #eaeaea);
  border: 1px solid #a9a9a9;
  border-radius: 3px;
}
.btn.off { color: #b4bab4; border-color: #c8c8c8; }
.cam-img { width: 342px; height: 165px; flex: 1; }
.rv-split { width: 22px; display: flex; align-items: center; justify-content: flex-end; padding-right: 5px; }
.arrow-l { border-right: 5px solid #333; border-top: 4px solid transparent; border-bottom: 4px solid transparent; }
.rv-scene { width: 547px; height: 816px; background: #303030; }
.rl { stroke: #7c7c7c; stroke-width: 1; fill: none; }
.rv-edge { width: 16px; display: flex; align-items: center; justify-content: center; }
.arrow-r { border-left: 5px solid #333; border-top: 4px solid transparent; border-bottom: 4px solid transparent; }

/* Panel at the bottom */
.taskbar {
  height: 32px;
  flex: none;
  display: flex;
  align-items: center;
  background: linear-gradient(#f4f3f5, #d2d1d3);
  border-top: 1px solid #f8f8f8;
  color: #111;
}
.start { width: 28px; height: 29px; background: #0d6a9a; border-radius: 2px; }
.pager { width: 24px; height: 28px; margin-left: 3px; display: flex; align-items: center; justify-content: center; font-size: 15px; color: #555; border: 1px solid #a8c8e8; border-radius: 4px; background: #f4f4f6; }
.pager.pressed { background: #d6d5d7; border-color: #c4c4c4; }
.tk-dots { margin-left: 5px; }
.tk-app { margin-left: 4px; }
.tk-app2 { margin-left: 9px; }
.tk-dots.b { margin-left: 9px; }
.tk-win { display: flex; align-items: center; gap: 4px; margin-left: 5px; font-size: 15px; white-space: nowrap; }
.tk-win.active {
  margin-left: 16px;
  width: 198px;
  height: 23px;
  gap: 2px;
  padding-left: 2px;
  background: #fff;
  border: 1px solid #8fb4e0;
  border-radius: 4px;
}
.tk-tray { margin-left: auto; margin-right: 7px; }
```
